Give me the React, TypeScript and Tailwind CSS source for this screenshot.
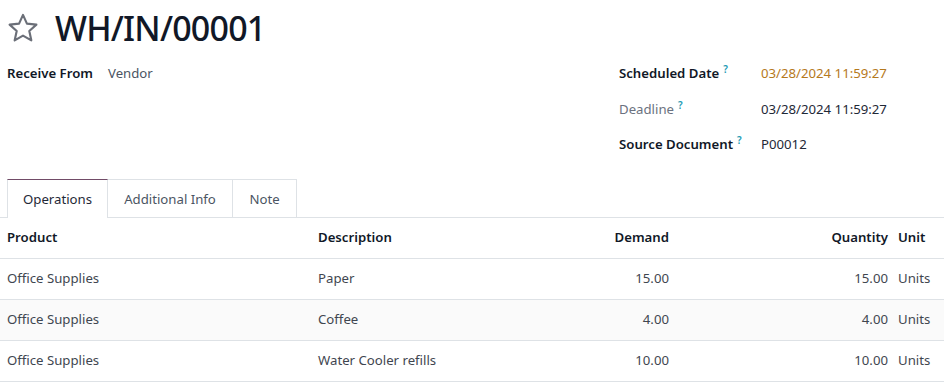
import React from "react";

const rows = [
  { product: "Office Supplies", description: "Paper", demand: "15.00", quantity: "15.00", unit: "Units" },
  { product: "Office Supplies", description: "Coffee", demand: "4.00", quantity: "4.00", unit: "Units" },
  { product: "Office Supplies", description: "Water Cooler refills", demand: "10.00", quantity: "10.00", unit: "Units" },
];

function Help() {
  return <sup className="ml-[4px] text-[10px] font-semibold text-[#1d9bb5] relative -top-[5px]">?</sup>;
}

function Star() {
  return (
    <svg width="34" height="32" viewBox="0 0 24 24" fill="none" stroke="#6b6f78" strokeWidth="1.6" strokeLinejoin="round">
      <path d="M12 2.2l2.95 6.55 7.1.72-5.33 4.77 1.52 7.02L12 17.7l-6.24 3.56 1.52-7.02L1.95 9.47l7.1-.72z" />
    </svg>
  );
}

export default function App() {
  return (
    <div className="w-[944px] h-[392px] bg-white text-[#3f4650] text-[13.2px] overflow-hidden" style={{ fontFamily: '"Noto Sans", sans-serif' }}>
      {/* Title */}
      <div className="flex items-center h-[56px] pl-[6px]">
        <Star />
        <h1 className="ml-[15px] text-[34px] font-medium text-[#111827] tracking-[-0.8px] leading-none">WH/IN/00001</h1>
      </div>

      {/* Fields */}
      <div className="flex h-[123px]">
        <div className="w-[611px] pl-[7px] pt-[6px]">
          <div className="flex h-[23px] items-center">
            <span className="w-[101px] font-semibold text-[#111827]">Receive From</span>
            <span className="text-[#4b5563]">Vendor</span>
          </div>
        </div>
        <div className="pl-[8px] pt-[6px] flex flex-col">
          <div className="flex h-[23px] items-center">
            <span className="w-[142px] font-semibold text-[#111827]">Scheduled Date<Help /></span>
            <span className="text-[#b5791c]">03/28/2024 11:59:27</span>
          </div>
          <div className="flex h-[23px] items-center mt-[13px]">
            <span className="w-[142px] text-[#6b7280]">Deadline<Help /></span>
            <span className="text-[#1f2937]">03/28/2024 11:59:27</span>
          </div>
          <div className="flex h-[23px] items-center mt-[12px]">
            <span className="w-[142px] font-semibold text-[#111827]">Source Document<Help /></span>
            <span className="text-[#1f2937]">P00012</span>
          </div>
        </div>
      </div>

      {/* Tabs */}
      <div className="flex h-[39px] border-b border-[#dee2e6]">
        <div className="w-[7px]" />
        <div className="w-[101px] flex items-center justify-center bg-white border-x border-[#dee2e6] border-t border-t-[#714b67] -mb-px pt-[2px] text-[#1f2937]">Operations</div>
        <div className="w-[125px] flex items-center justify-center border-t border-r border-[#dee2e6] pt-[2px] text-[#4b5563]">Additional Info</div>
        <div className="w-[64px] flex items-center justify-center border-t border-r border-[#dee2e6] pt-[2px] text-[#4b5563]">Note</div>
      </div>

      {/* Table */}
      <table className="w-full border-collapse">
        <thead>
          <tr className="h-[40px] border-b border-[#dee2e6] text-[#111827]">
            <th className="pl-[7px] text-left font-semibold w-[318px]">Product</th>
            <th className="text-left font-semibold">Description</th>
            <th className="text-right font-semibold w-[150px]">Demand</th>
            <th className="text-right font-semibold w-[219px]">Quantity</th>
            <th className="text-left font-semibold pl-[10px] w-[56px]">Unit</th>
          </tr>
        </thead>
        <tbody>
          {rows.map((r, i) => (
            <tr key={i} className={`h-[41px] border-b border-[#dee2e6] ${i === 1 ? "bg-[#fafafa]" : ""}`}>
              <td className="pl-[7px]">{r.product}</td>
              <td>{r.description}</td>
              <td className="text-right">{r.demand}</td>
              <td className="text-right">{r.quantity}</td>
              <td className="pl-[10px]">{r.unit}</td>
            </tr>
          ))}
        </tbody>
      </table>
    </div>
  );
}
